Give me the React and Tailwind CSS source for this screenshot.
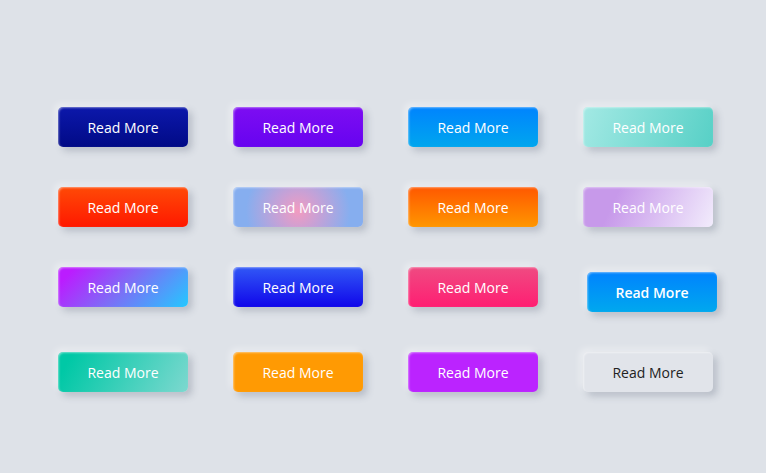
const buttons = [
  { bg: "bg-[linear-gradient(180deg,#0c18ab,#010a86)]" },
  { bg: "bg-[linear-gradient(180deg,#7d0df2,#6703f0)]" },
  { bg: "bg-[linear-gradient(180deg,#0084fe,#00a6ee)]" },
  { bg: "bg-[linear-gradient(110deg,#a3e9e4,#57d0c6)]" },
  { bg: "bg-[linear-gradient(180deg,#ff4a06,#ff1800)]" },
  { bg: "bg-[radial-gradient(circle_at_50%_60%,#f29bc0_0%,#c7a1d6_30%,#86aeef_75%)]" },
  { bg: "bg-[linear-gradient(180deg,#ff5800,#ff9600)]" },
  { bg: "bg-[linear-gradient(115deg,#c799ea_25%,#f2ecfc_100%)]" },
  { bg: "bg-[linear-gradient(135deg,#bb1cff_10%,#7e6cf6_50%,#24c8ff_100%)]" },
  { bg: "bg-[linear-gradient(180deg,#3158f6,#1006ea)]" },
  { bg: "bg-[linear-gradient(180deg,#ef4b82,#ff1e72)]" },
  { bg: "bg-[linear-gradient(180deg,#0083fe,#00a8ee)]", lifted: true },
  { bg: "bg-[linear-gradient(120deg,#00c8a6_10%,#7dd8cf_100%)]" },
  { bg: "bg-[#ff9a03]" },
  { bg: "bg-[#bb23ff]" },
  { bg: "bg-[#e1e4ea]", dark: true },
];

function ReadMore({ bg, lifted, dark }) {
  return (
    <button
      className={`w-[130px] h-10 rounded-[5px] text-[14px] ${bg} ${
        dark ? "text-[#222]" : "text-white"
      } ${
        lifted ? "mt-[5px] ml-[4px] font-semibold" : ""
      } shadow-[inset_1px_1px_2px_rgba(255,255,255,0.45),-3px_-3px_7px_rgba(255,255,255,0.45),4px_4px_7px_rgba(94,104,121,0.3)]`}
    >
      Read More
    </button>
  );
}

export default function App() {
  return (
    <div
      className="min-h-screen w-full bg-[#dee2e8] pl-[58px] pt-[107px]"
      style={{ fontFamily: '"Open Sans", "Noto Sans", sans-serif' }}
    >
      <div className="grid grid-cols-[repeat(4,130px)] gap-x-[45px] gap-y-10 items-start">
        {buttons.map((b, i) => (
          <ReadMore key={i} {...b} />
        ))}
      </div>
    </div>
  );
}
